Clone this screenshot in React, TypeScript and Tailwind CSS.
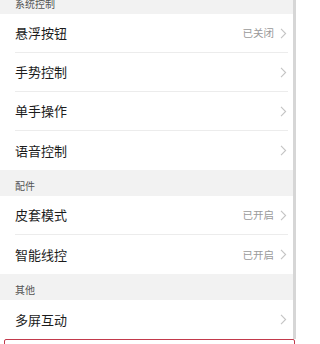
import React from "react";

type Item = { label: string; value?: string };
type Section = { title: string; items: Item[] };

const sections: Section[] = [
  {
    title: "系统控制",
    items: [
      { label: "悬浮按钮", value: "已关闭" },
      { label: "手势控制" },
      { label: "单手操作" },
      { label: "语音控制" },
    ],
  },
  {
    title: "配件",
    items: [
      { label: "皮套模式", value: "已开启" },
      { label: "智能线控", value: "已开启" },
    ],
  },
  { title: "其他", items: [{ label: "多屏互动" }] },
];

function Chevron() {
  return (
    <svg width="7" height="11" viewBox="0 0 7 11" fill="none">
      <path d="M1 0.8L5.6 5.5L1 10.2" stroke="#c4c4c4" strokeWidth="1.1" />
    </svg>
  );
}

export default function App() {
  return (
    <div
      className="w-[300px] h-[344px] overflow-hidden bg-white"
      style={{ fontFamily: '"Noto Sans CJK SC", "Noto Sans", sans-serif' }}
    >
      <div className="w-[296px] border-r-[3px] border-[#d6d6d6] mt-[-12px]">
        {sections.map((s) => (
          <div key={s.title}>
            <div className="h-[26px] bg-[#f2f2f2] flex items-end pb-[3px] pl-[15px] text-[10px] text-[#555]">
              {s.title}
            </div>
            {s.items.map((it, i) => (
              <div key={it.label} className="h-[39px] pl-[15px] pr-[5px]">
                <div
                  className={
                    "h-full flex items-center justify-between pr-[1px] " +
                    (i < s.items.length - 1 ? "border-b border-[#ececec]" : "")
                  }
                >
                  <span className="text-[13px] text-[#1c1c1c]">{it.label}</span>
                  <div className="flex items-center gap-[6px]">
                    {it.value && (
                      <span className="text-[10.5px] text-[#9a9a9a]">{it.value}</span>
                    )}
                    <Chevron />
                  </div>
                </div>
              </div>
            ))}
          </div>
        ))}
      </div>
      <div className="ml-[4px] w-[291px] h-[20px] border-[1.5px] border-[#c23a4c] rounded-[2px] bg-white" />
    </div>
  );
}
